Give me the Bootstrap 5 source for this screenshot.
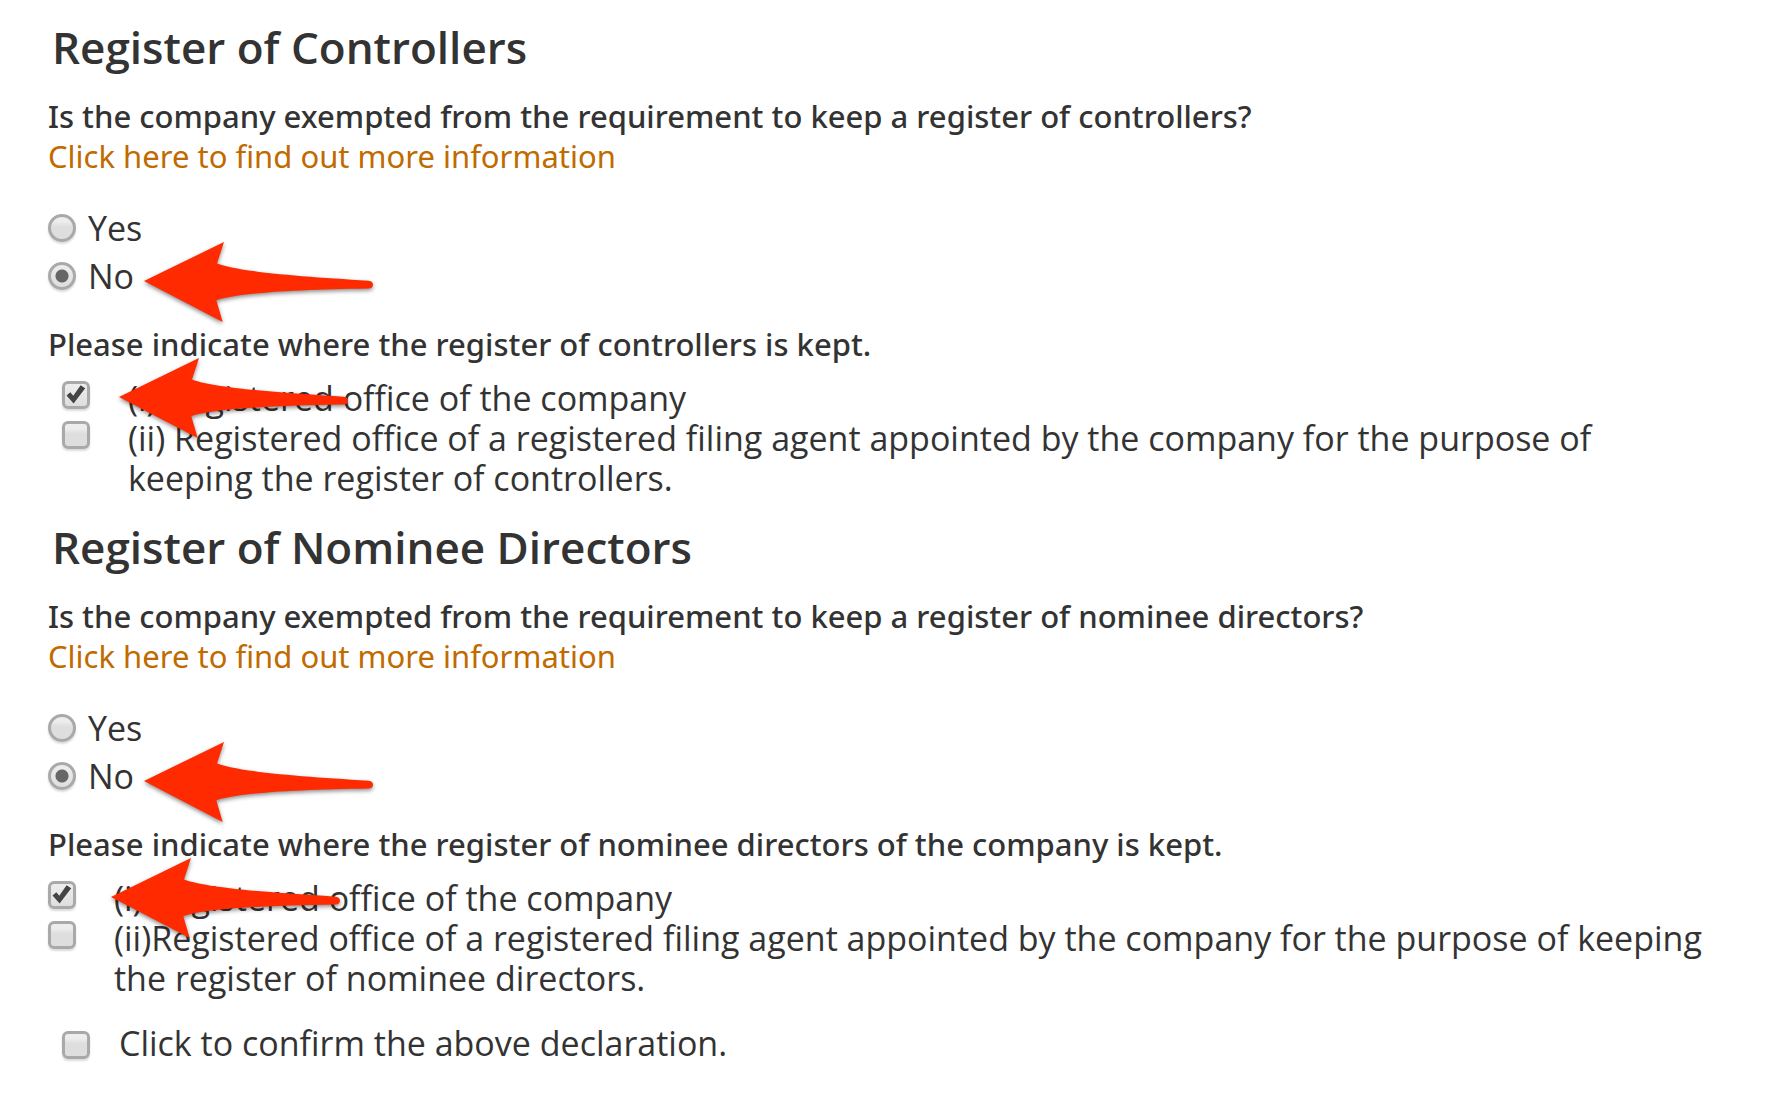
<!DOCTYPE html>
<html lang="en">
<head>
<meta charset="utf-8">
<meta name="viewport" content="width=device-width, initial-scale=1">
<title>Register of Controllers and Nominee Directors</title>
<link rel="stylesheet" href="https://cdn.jsdelivr.net/npm/bootstrap@5.3.0/dist/css/bootstrap.min.css">
<style>
  body { font-family: "Open Sans", "Noto Sans", sans-serif; font-size: 34px; line-height: 40px; color: #333; background: #fff; }
  .page { padding: 19px 48px 36px; }
  .register { padding-bottom: 21px; }
  .register-title { font-size: 44px; line-height: 56px; font-weight: 600; margin: 0 0 21px 4px; }
  .question { font-family: "Noto Sans", "Open Sans", sans-serif; font-size: 31px; line-height: 40px; font-weight: 500; }
  .info-link { color: #c06a00; font-weight: 400; text-decoration: none; }
  .info-link:hover { text-decoration: underline; }
  .answers { margin: 28px 0 24px; }
  .answer { height: 48px; gap: 12px; }
  .places { margin-top: 14px; }
  .places.inset, .confirm { padding: 0 14px; }
  .place { gap: 38px; }
  .confirm { gap: 29px; margin-top: 4px; }
  .form-check-input.tick {
    width: 28px; height: 28px; margin: 0; flex: none; float: none;
    border: 3px solid #a9a9a9;
    background: linear-gradient(#ededed 20%, #dedede 45%, #dedede);
    box-shadow: 0 2px 2px rgba(0, 0, 0, .14);
  }
  .form-check-input.tick[type=checkbox] { border-radius: 6px; margin-top: 3px; }
  .confirm .form-check-input.tick[type=checkbox] { margin-top: 8px; }
  .form-check-input.tick[type=checkbox]:checked {
    background: url("data:image/svg+xml,%3Csvg xmlns='http://www.w3.org/2000/svg' viewBox='0 0 22 22'%3E%3Cpath d='M1.5 11.5l3.8-3.2 3 3.4L15.6 1.2l4.6 3L8.6 19.6z' fill='%23444'/%3E%3C/svg%3E") center/22px 22px no-repeat, linear-gradient(#ededed, #dedede);
  }
  .form-check-input.tick[type=radio]:checked {
    background: radial-gradient(circle, #666 6px, transparent 7px), linear-gradient(#ededed, #dedede);
  }
  .arrow { position: absolute; width: 229px; height: 80px; overflow: visible; pointer-events: none; filter: drop-shadow(0 2px 2px rgba(0, 0, 0, .45)); }
  .arrow-answer { left: 96px; top: 38px; }
  .arrow-place { left: 63px; top: -20px; }
  .inset .arrow-place { left: 71px; }
</style>
<script src="https://cdn.jsdelivr.net/npm/bootstrap@5.3.0/dist/js/bootstrap.bundle.min.js"></script>
</head>
<body>
<svg class="d-none" aria-hidden="true">
  <symbol id="arrow" viewBox="0 0 687 238" preserveAspectRatio="none">
    <path fill="#ff2a00" d="M0 116L240 0L219 64C290 90 480 103 674 115Q687 117 687 127Q687 138 673 138C470 141 285 150 217 173L236 238Z"/>
  </symbol>
</svg>
<main class="page container-fluid">
  <form>
    <section class="register">
      <h2 class="register-title">Register of Controllers</h2>
      <div class="question" id="q1">Is the company exempted from the requirement to keep a register of controllers?</div>
      <div class="question"><a class="info-link" href="#">Click here to find out more information</a></div>
      <div class="answers position-relative" role="radiogroup" aria-labelledby="q1">
        <div class="answer d-flex align-items-center">
          <input class="form-check-input tick" type="radio" name="controllers" id="c-yes"><label for="c-yes">Yes</label>
        </div>
        <div class="answer d-flex align-items-center">
          <input class="form-check-input tick" type="radio" name="controllers" id="c-no" checked><label for="c-no">No</label>
        </div>
        <svg class="arrow arrow-answer" aria-hidden="true"><use href="#arrow"/></svg>
      </div>
      <div class="question">Please indicate where the register of controllers is kept.</div>
      <div class="places inset position-relative">
        <div class="place d-flex align-items-start">
          <input class="form-check-input tick" type="checkbox" id="c-office" checked><label for="c-office">(i) Registered office of the company</label>
        </div>
        <div class="place d-flex align-items-start">
          <input class="form-check-input tick" type="checkbox" id="c-agent"><label for="c-agent">(ii) Registered office of a registered filing agent appointed by the company for the purpose of keeping the register of controllers.</label>
        </div>
        <svg class="arrow arrow-place" aria-hidden="true"><use href="#arrow"/></svg>
      </div>
    </section>
    <section class="register">
      <h2 class="register-title">Register of Nominee Directors</h2>
      <div class="question" id="q2">Is the company exempted from the requirement to keep a register of nominee directors?</div>
      <div class="question"><a class="info-link" href="#">Click here to find out more information</a></div>
      <div class="answers position-relative" role="radiogroup" aria-labelledby="q2">
        <div class="answer d-flex align-items-center">
          <input class="form-check-input tick" type="radio" name="directors" id="d-yes"><label for="d-yes">Yes</label>
        </div>
        <div class="answer d-flex align-items-center">
          <input class="form-check-input tick" type="radio" name="directors" id="d-no" checked><label for="d-no">No</label>
        </div>
        <svg class="arrow arrow-answer" aria-hidden="true"><use href="#arrow"/></svg>
      </div>
      <div class="question">Please indicate where the register of nominee directors of the company is kept.</div>
      <div class="places position-relative">
        <div class="place d-flex align-items-start">
          <input class="form-check-input tick" type="checkbox" id="d-office" checked><label for="d-office">(i) Registered office of the company</label>
        </div>
        <div class="place d-flex align-items-start">
          <input class="form-check-input tick" type="checkbox" id="d-agent"><label for="d-agent">(ii)Registered office of a registered filing agent appointed by the company for the purpose of keeping the register of nominee directors.</label>
        </div>
        <svg class="arrow arrow-place" aria-hidden="true"><use href="#arrow"/></svg>
      </div>
    </section>
    <div class="confirm d-flex align-items-start">
      <input class="form-check-input tick" type="checkbox" id="confirm"><label for="confirm">Click to confirm the above declaration.</label>
    </div>
  </form>
</main>
</body>
</html>
